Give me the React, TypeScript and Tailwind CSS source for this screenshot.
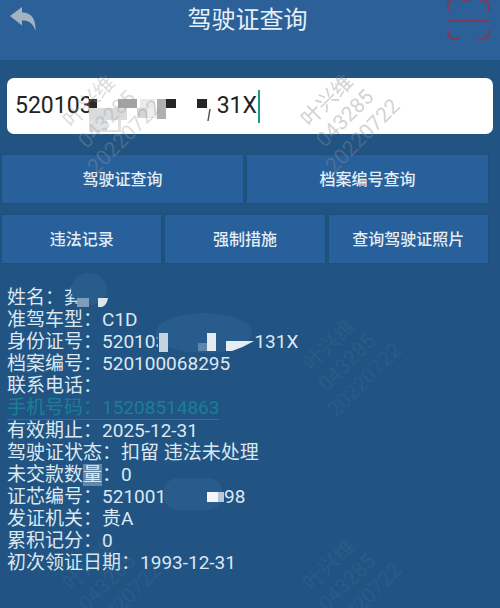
const font = { fontFamily: 'Roboto,"Noto Sans CJK SC",sans-serif' };

function Mark({ cls }: { cls: string }) {
  return (
    <div className={"absolute pointer-events-none rotate-[-45deg] text-center text-[21px] leading-[25px] " + cls}>
      <div>叶兴维</div>
      <div>043285</div>
      <div>20220722</div>
    </div>
  );
}

function Btn({ label }: { label: string }) {
  return (
    <div className="flex-1 h-12 pt-[2px] flex items-center justify-center bg-[#27609a] text-[#e3edf5] text-[16px] font-medium shadow-[0_0_2px_#1c4a75]">
      {label}
    </div>
  );
}

function Row({ k, children }: { k: string; children?: React.ReactNode }) {
  return (
    <div className="h-[22.1px] leading-[22px] whitespace-nowrap flex">
      <span>{k}：</span>
      {children}
    </div>
  );
}

export default function App() {
  return (
    <div className="relative w-[500px] h-[608px] overflow-hidden bg-[#215482]" style={font}>
      <header className="h-[60px] bg-[#2b6098] flex items-start justify-between pl-[9px] pr-[9px]">
        <svg className="mt-[6px] shrink-0" width="28" height="26" viewBox="0 0 28 26">
          <path d="M1 10 L13 1 L13 6.5 C21 6.5 27 11 26.5 25 C24 17 20 14.5 13 14.5 L13 19.5 Z" fill="#a3b2c0" />
        </svg>
        <h1 className="text-[#e6eff6] text-[24px] leading-[40px] ml-[11px]">驾驶证查询</h1>
        <svg className="shrink-0" width="44" height="42" viewBox="0 0 44 42" fill="none" stroke="#7d3a5a" strokeWidth="2.2">
          <path d="M1 11 V6 Q1 1 6 0 M33 0 Q42 0 42 8 V11 M1 21 H43 M1 30 V33 Q1 39 9 39 H13 M31 39 H36 Q42 39 42 32 V30" />
          <path d="M14 0 H23" />
        </svg>
      </header>

      <div className="mx-[7px] mt-[18px] h-[56px] rounded-[7px] bg-white flex items-center pl-[8px] text-[#222] text-[23px]">
        <span>52010</span>
        <span className="w-[9px] overflow-hidden">3</span>
        <svg className="self-stretch shrink-0 overflow-visible" width="128" height="56" viewBox="0 0 128 56">
          <rect x="0" y="21" width="8" height="9" fill="#2a2a2a" />
          <rect x="0" y="30" width="38" height="12" fill="#d9dbdd" />
          <rect x="0" y="42" width="32" height="12" fill="#dfe1e3" />
          <rect x="18" y="42" width="11" height="10" fill="#ffffff" />
          <rect x="29" y="21" width="19" height="9" fill="#a3a3a3" />
          <rect x="51" y="21" width="15" height="9" fill="#e8eaec" />
          <rect x="48" y="30" width="10" height="10" fill="#d3d5d8" />
          <rect x="58" y="30" width="10" height="10" fill="#eceef0" />
          <rect x="68" y="21" width="9" height="20" fill="#b0b0b0" />
          <rect x="77" y="21" width="10" height="9" fill="#262626" />
          <rect x="108" y="21" width="10" height="9" fill="#262626" />
          <path d="M121 31 L119 43" stroke="#555" strokeWidth="1.5" />
        </svg>
        <span>31X</span>
        <span className="w-[2px] h-[33px] bg-[#1f9a85] ml-[1px]" />
      </div>

      <div className="mt-[21px] ml-[2px] w-[486px] flex flex-col gap-[12px]">
        <div className="flex gap-[4px]">
          <Btn label="驾驶证查询" />
          <Btn label="档案编号查询" />
        </div>
        <div className="flex gap-[4px]">
          <Btn label="违法记录" />
          <Btn label="强制措施" />
          <Btn label="查询驾驶证照片" />
        </div>
      </div>

      <div className="mt-[24px] pl-[7px] text-[#dbe8f1] text-[19px]">
        <Row k="姓名">
          <span className="w-[13px] overflow-hidden">龚</span>
          <svg className="shrink-0 overflow-visible" width="32" height="22" viewBox="0 0 32 22">
            <ellipse cx="12" cy="2" rx="18" ry="16" fill="#285c8c" />
            <rect x="0" y="11" width="12" height="9" fill="#7f9db8" />
            <path d="M21 11 H31 Q30 18 25 20 H21 Z" fill="#dde6ee" />
          </svg>
        </Row>
        <Row k="准驾车型">C1D</Row>
        <Row k="身份证号">
          <span>52010</span>
          <span className="w-[3px] overflow-hidden">3</span>
          <svg className="shrink-0 overflow-visible" width="96" height="22" viewBox="0 0 96 22">
            <ellipse cx="46" cy="2" rx="48" ry="20" fill="#285c8c" />
            <rect x="1" y="2" width="9" height="19" fill="#c4d2de" />
            <rect x="49" y="2" width="9" height="18" fill="#e4ecf2" />
            <rect x="40" y="12" width="9" height="8" fill="#5f86a8" />
            <path d="M68 10 H96 Q86 16 74 20 H68 Z" fill="#e6eef4" />
          </svg>
          <span>131X</span>
        </Row>
        <Row k="档案编号">520100068295</Row>
        <Row k="联系电话" />
        <div className="h-[22.1px] leading-[21px] w-fit text-[#1a7f94] border-b border-[#1a7f94] whitespace-nowrap">
          手机号码：15208514863
        </div>
        <Row k="有效期止">2025-12-31</Row>
        <Row k="驾驶证状态">扣留 违法未处理</Row>
        <div className="h-[22.1px] leading-[22px] whitespace-nowrap flex">
          <span>未交款数</span>
          <span className="bg-[#a9bccc]/50">量</span>
          <span>：0</span>
        </div>
        <Row k="证芯编号">
          <span>521001</span>
          <svg className="shrink-0 overflow-visible" width="58" height="22" viewBox="0 0 58 22">
            <rect x="-2" y="-8" width="58" height="32" rx="14" fill="#285c8c" />
            <rect x="41" y="6" width="11" height="10" fill="#f3f6f9" />
            <rect x="52" y="6" width="6" height="10" fill="#b9c8d6" />
          </svg>
          <span>98</span>
        </Row>
        <Row k="发证机关">贵A</Row>
        <Row k="累积记分">0</Row>
        <Row k="初次领证日期">1993-12-31</Row>
      </div>

      <Mark cls="left-[60px] top-[82px] text-[#9a9a9a]/35" />
      <Mark cls="left-[298px] top-[81px] text-[#8a8a8a]/40" />
      <Mark cls="left-[300px] top-[325px] text-[#6f93b3]/15" />
      <Mark cls="left-[60px] top-[545px] text-[#6f93b3]/15" />
      <Mark cls="left-[300px] top-[545px] text-[#6f93b3]/15" />
    </div>
  );
}
